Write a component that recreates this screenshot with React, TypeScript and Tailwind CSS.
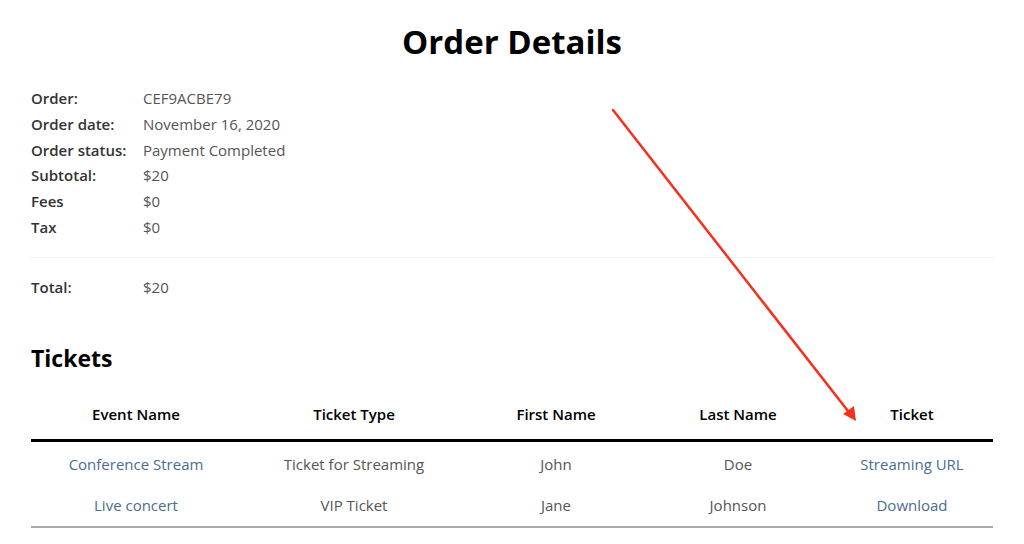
const details = [
  ['Order:', 'CEF9ACBE79'],
  ['Order date:', 'November 16, 2020'],
  ['Order status:', 'Payment Completed'],
  ['Subtotal:', '$20'],
  ['Fees', '$0'],
  ['Tax', '$0'],
];

const tickets = [
  { event: 'Conference Stream', type: 'Ticket for Streaming', first: 'John', last: 'Doe', ticket: 'Streaming URL' },
  { event: 'Live concert', type: 'VIP Ticket', first: 'Jane', last: 'Johnson', ticket: 'Download' },
];

export default function App() {
  return (
    <div className="relative w-[1024px] h-[544px] overflow-hidden bg-white font-['Open_Sans',sans-serif]">
      <div className="px-[31px] pt-[21px]">
        <h1 className="text-center text-[33px] leading-[42px] font-bold text-black">Order Details</h1>

        {/* Summary */}
        <div className="mt-[23px] text-[15px] leading-[25.8px]">
          {details.map(([label, value]) => (
            <div key={label} className="flex">
              <span className="w-[112px] font-semibold text-[#333]">{label}</span>
              <span className="text-[#555]">{value}</span>
            </div>
          ))}
        </div>
        <div className="mt-[16px] border-t border-[#eeeeee]" />
        <div className="mt-[16px] flex text-[15px] leading-[26px]">
          <span className="w-[112px] font-semibold text-[#333]">Total:</span>
          <span className="text-[#555]">$20</span>
        </div>

        <h2 className="mt-[42px] text-[23px] leading-[32px] font-bold text-black">Tickets</h2>

        {/* Tickets table */}
        <table className="mt-[29px] w-full border-collapse text-[15px]">
          <thead>
            <tr className="border-b-[3px] border-black">
              <th className="w-[210px] pb-[14px] font-semibold text-black">Event Name</th>
              <th className="w-[226px] pb-[14px] font-semibold text-black">Ticket Type</th>
              <th className="w-[178px] pb-[14px] font-semibold text-black">First Name</th>
              <th className="w-[186px] pb-[14px] font-semibold text-black">Last Name</th>
              <th className="pb-[14px] font-semibold text-black">Ticket</th>
            </tr>
          </thead>
          <tbody className="border-b-2 border-[#aaaaaa] text-center">
            {tickets.map((t, i) => (
              <tr key={t.event} className={i === 0 ? 'h-[44px]' : 'h-[42px]'}>
                <td className={i === 0 ? 'pt-[2px] text-[#4a6d8f]' : 'text-[#4a6d8f]'}>{t.event}</td>
                <td className={i === 0 ? 'pt-[2px] text-[#555]' : 'text-[#555]'}>{t.type}</td>
                <td className={i === 0 ? 'pt-[2px] text-[#555]' : 'text-[#555]'}>{t.first}</td>
                <td className={i === 0 ? 'pt-[2px] text-[#555]' : 'text-[#555]'}>{t.last}</td>
                <td className={i === 0 ? 'pt-[2px] text-[#4a6d8f]' : 'text-[#4a6d8f]'}>{t.ticket}</td>
              </tr>
            ))}
          </tbody>
        </table>
      </div>

      {/* Annotation arrow */}
      <svg className="absolute left-0 top-0 pointer-events-none" width="1024" height="544">
        <line x1="613" y1="110" x2="848" y2="411" stroke="#f5301f" strokeWidth="2.5" strokeLinecap="round" />
        <polygon points="856,421 843,414 854,406" fill="#f5301f" />
      </svg>
    </div>
  );
}
